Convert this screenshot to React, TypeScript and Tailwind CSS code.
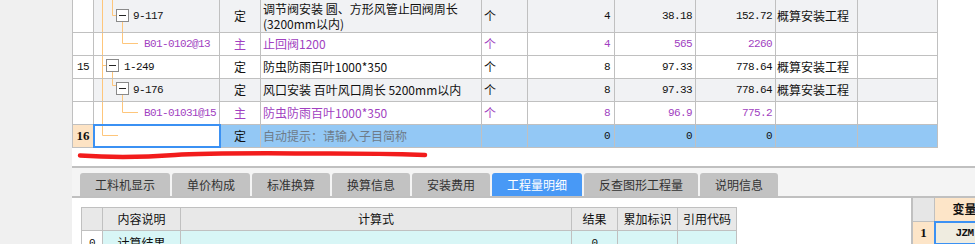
import type { ReactNode } from "react";

const mono = "font-['Liberation_Mono',monospace] text-[11px] tracking-[-0.6px]";
const LINE = "#fec67b";
const PURPLE = "text-[#a13fc1]";

function Cell({
  w,
  className = "",
  children,
}: {
  w: string;
  className?: string;
  children?: ReactNode;
}) {
  return (
    <div
      className={`${w} shrink-0 h-full border-r border-[#c0c0c0] flex items-center overflow-hidden whitespace-nowrap ${className}`}
    >
      {children}
    </div>
  );
}

// minus box used by the tree
function Box({ x, y }: { x: number; y: number }) {
  return (
    <>
      <rect x={x + 0.5} y={y + 0.5} width={12} height={12} fill="#fff" stroke="#8a8a8a" />
      <path d={`M${x + 3} ${y + 6.5}H${x + 10}`} stroke="#222" />
    </>
  );
}

function Tree({ w, h, children }: { w: number; h: number; children: ReactNode }) {
  return (
    <svg width={w} height={h} className="shrink-0" fill="none" stroke={LINE}>
      {children}
    </svg>
  );
}

type RowProps = {
  h: string;
  bg: string;
  num?: ReactNode;
  numCls?: string;
  tree: ReactNode;
  code?: string;
  codeSelected?: boolean;
  kind: string;
  name: ReactNode;
  nameCls?: string;
  unit?: string;
  qty: string;
  price: string;
  total: string;
  type?: string;
  purple?: boolean;
};

function Row(p: RowProps) {
  const tone = p.purple ? PURPLE : "text-[#111]";
  return (
    <div className={`${p.h} flex border-b border-[#c0c0c0]`}>
      <Cell w="w-[21px]" className={`justify-center bg-white ${p.numCls ?? mono}`}>
        {p.num}
      </Cell>
      <Cell
        w="w-[126px]"
        className={`${p.codeSelected ? "bg-white outline-2 outline-[#3b91f3] -outline-offset-1 relative z-10" : p.bg} ${mono} ${tone}`}
      >
        {p.tree}
        {p.code}
      </Cell>
      <Cell w="w-[41px]" className={`justify-center ${p.bg} ${tone}`}>
        {p.kind}
      </Cell>
      <Cell w="w-[221px]" className={`pl-[2px] ${p.bg} ${p.nameCls ?? tone}`}>
        {p.name}
      </Cell>
      <Cell w="w-[46px]" className={`pl-[2px] ${p.bg} ${tone}`}>
        {p.unit}
      </Cell>
      <Cell w="w-[87px]" className={`justify-end pr-[4px] ${p.bg} ${mono} ${tone}`}>
        {p.qty}
      </Cell>
      <Cell w="w-[81px]" className={`justify-end pr-[3px] ${p.bg} ${mono} ${tone}`}>
        {p.price}
      </Cell>
      <Cell w="w-[80px]" className={`justify-end pr-[3px] ${p.bg} ${mono} ${tone}`}>
        {p.total}
      </Cell>
      <Cell w="w-[82px]" className={`pl-[1px] ${p.bg} text-[#111]`}>
        {p.type}
      </Cell>
      <Cell w="w-[80px]" className={p.bg} />
    </div>
  );
}

const tabs = ["工料机显示", "单价构成", "标准换算", "换算信息", "安装费用", "工程量明细", "反查图形工程量", "说明信息"];

export default function App() {
  return (
    <div className="relative flex w-[975px] h-[244px] overflow-hidden bg-white font-['Noto_Sans_CJK_SC','Noto_Sans',sans-serif] text-[12px] leading-[14px] text-[#111]">
      <div className="w-[72px] shrink-0 bg-[#f0f0f0]" />

      <div className="flex-1 flex flex-col min-w-0">
        {/* budget rows */}
        <div className="w-[866px] border-l border-[#c0c0c0]">
          <Row
            h="h-[33px]"
            bg="bg-[#f1f2f4]"
            tree={
              <Tree w={39} h={32}>
                <path d="M8.5 0V32M18.5 0V15.5H22M28.5 22V32" />
                <Box x={22} y={9} />
              </Tree>
            }
            code="9-117"
            kind="定"
            name={
              <div className="flex flex-col leading-[15px]">
                <span>调节阀安装 圆、方形风管止回阀周长</span>
                <span>(3200mm以内)</span>
              </div>
            }
            unit="个"
            qty="4"
            price="38.18"
            total="152.72"
            type="概算安装工程"
          />
          <Row
            h="h-[23px]"
            bg="bg-white"
            purple
            tree={
              <Tree w={50} h={22}>
                <path d="M8.5 0V22M28.5 0V10.5H44" />
              </Tree>
            }
            code="B01-0102@13"
            kind="主"
            name="止回阀1200"
            unit="个"
            qty="4"
            price="565"
            total="2260"
          />
          <Row
            h="h-[23px]"
            bg="bg-white"
            num="15"
            tree={
              <Tree w={30} h={22}>
                <path d="M8.5 0V22M8.5 9.5H12M18.5 16V22" />
                <Box x={12} y={3} />
              </Tree>
            }
            code="1-249"
            kind="定"
            name="防虫防雨百叶1000*350"
            unit="个"
            qty="8"
            price="97.33"
            total="778.64"
            type="概算安装工程"
          />
          <Row
            h="h-[23px]"
            bg="bg-[#f1f2f4]"
            tree={
              <Tree w={39} h={22}>
                <path d="M8.5 0V22M18.5 0V6.5H22M28.5 16V22" />
                <Box x={22} y={3} />
              </Tree>
            }
            code="9-176"
            kind="定"
            name="风口安装 百叶风口周长 5200mm以内"
            unit="个"
            qty="8"
            price="97.33"
            total="778.64"
            type="概算安装工程"
          />
          <Row
            h="h-[23px]"
            bg="bg-white"
            purple
            tree={
              <Tree w={50} h={22}>
                <path d="M8.5 0V22M28.5 0V10.5H44" />
              </Tree>
            }
            code="B01-01031@15"
            kind="主"
            name="防虫防雨百叶1000*350"
            unit="个"
            qty="8"
            price="96.9"
            total="775.2"
          />
          <Row
            h="h-[23px]"
            bg="bg-[#93c8f5]"
            num="16"
            numCls="!bg-[#fde3c4] font-['Liberation_Serif',serif] font-bold text-[13px]"
            codeSelected
            tree={
              <Tree w={30} h={22}>
                <path d="M8.5 0V10.5H24" />
              </Tree>
            }
            kind="定"
            name="自动提示：请输入子目简称"
            nameCls="text-[#6e7b89]"
            qty="0"
            price="0"
            total="0"
          />
        </div>

        <div className="h-[18px] shrink-0" />
        <div className="h-[2px] shrink-0 bg-[#c0c0c0]" />

        {/* tab strip */}
        <div className="h-[30px] shrink-0 flex items-end gap-[2px] pl-[8px] bg-[#f4f4f4] border-b-2 border-[#c0c0c0]">
          {tabs.map((t) => (
            <div
              key={t}
              className={`h-[23px] px-[15px] flex items-center rounded-t-[3px] ${
                t === "工程量明细" ? "bg-[#4899f6] text-white" : "bg-[#c2c2c2] text-[#333]"
              }`}
            >
              {t}
            </div>
          ))}
        </div>

        <div className="flex flex-1 min-h-0">
          {/* quantity detail grid */}
          <div className="w-[839px] shrink-0 pl-[9px] pt-[9px] bg-white">
            <div className="w-[656px] border-l border-t border-[#c0c0c0]">
              <div className="h-[23px] flex border-b border-[#c0c0c0] bg-[#e8e8e8]">
                <Cell w="w-[21px]" />
                <Cell w="w-[78px]" className="justify-center">内容说明</Cell>
                <Cell w="w-[391px]" className="justify-center">计算式</Cell>
                <Cell w="w-[46px]" className="justify-center">结果</Cell>
                <Cell w="w-[60px]" className="justify-center">累加标识</Cell>
                <Cell w="w-[59px]" className="justify-center">引用代码</Cell>
              </div>
              <div className="h-[23px] flex bg-[#d8f6f6]">
                <Cell w="w-[21px]" className={`justify-center bg-white ${mono}`}>0</Cell>
                <Cell w="w-[78px]" className="justify-center">计算结果</Cell>
                <Cell w="w-[391px]" />
                <Cell w="w-[46px]" className={`justify-center ${mono}`}>0</Cell>
                <Cell w="w-[60px]" />
                <Cell w="w-[59px]" />
              </div>
            </div>
          </div>

          <div className="w-[2px] shrink-0 bg-[#c0c0c0]" />

          {/* variable panel */}
          <div className="flex-1 flex flex-col">
            <div className="h-[24px] flex border-b border-[#c0c0c0]">
              <Cell w="w-[22px]" className="bg-[#e6e6e6]" />
              <Cell w="w-[60px]" className="justify-center bg-[#fde5c8] font-bold">变量</Cell>
            </div>
            <div className="h-[23px] flex">
              <Cell w="w-[22px]" className="justify-center bg-[#fde5c8] font-['Liberation_Serif',serif] font-bold text-[13px]">
                1
              </Cell>
              <Cell
                w="w-[60px]"
                className={`justify-center bg-[#efece0] outline-2 outline-[#3b91f3] -outline-offset-1 relative z-10 font-bold ${mono}`}
              >
                JZM
              </Cell>
            </div>
          </div>
        </div>
      </div>

      {/* red hand-drawn underline */}
      <svg className="absolute left-0 top-0 pointer-events-none" width={975} height={244} fill="none">
        <path
          d="M80 155.5C110 157.5 140 157.5 175 155S280 153.5 330 153.5S410 154.5 425 155"
          stroke="#f21c1c"
          strokeWidth={4.5}
          strokeLinecap="round"
        />
      </svg>
    </div>
  );
}
